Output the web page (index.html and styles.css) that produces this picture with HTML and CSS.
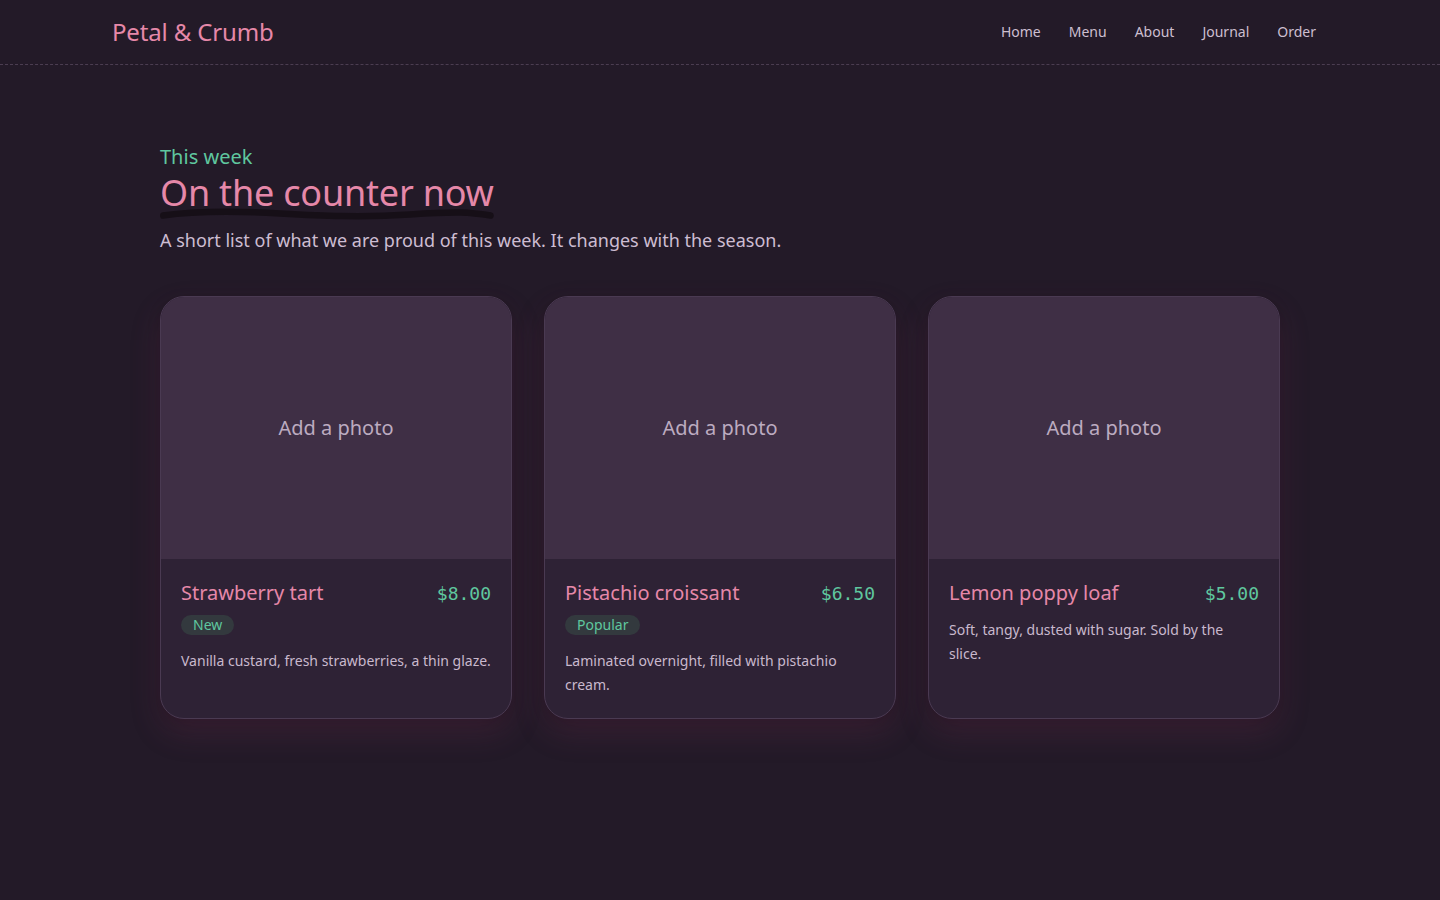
FILE: index.html
```html
<!DOCTYPE html>
<html lang="en">
<head>
<meta charset="utf-8">
<title>Petal &amp; Crumb</title>
<link rel="stylesheet" href="styles.css">
</head>
<body>
<header class="site-header">
  <div class="header-inner">
    <a class="logo" href="#">Petal &amp; Crumb</a>
    <nav class="nav">
      <a href="#">Home</a>
      <a href="#">Menu</a>
      <a href="#">About</a>
      <a href="#">Journal</a>
      <a href="#">Order</a>
    </nav>
  </div>
</header>

<main class="main">
  <section class="intro">
    <p class="eyebrow">This week</p>
    <h1 class="title">
      <span class="title-text">On the counter now</span>
      <svg class="squiggle" viewBox="0 0 334 12" preserveAspectRatio="none" aria-hidden="true">
        <path d="M3 7 C 40 2, 80 3, 120 5 S 200 9, 250 6 S 310 4, 331 7" fill="none" stroke="#160f17" stroke-width="6" stroke-linecap="round"/>
      </svg>
    </h1>
    <p class="lede">A short list of what we are proud of this week. It changes with the season.</p>
  </section>

  <section class="cards">
    <article class="card">
      <div class="photo">Add a photo</div>
      <div class="card-body">
        <div class="card-head">
          <h2 class="card-name">Strawberry tart</h2>
          <span class="price">$8.00</span>
        </div>
        <span class="badge">New</span>
        <p class="card-desc">Vanilla custard, fresh strawberries, a thin glaze.</p>
      </div>
    </article>

    <article class="card">
      <div class="photo">Add a photo</div>
      <div class="card-body">
        <div class="card-head">
          <h2 class="card-name">Pistachio croissant</h2>
          <span class="price">$6.50</span>
        </div>
        <span class="badge">Popular</span>
        <p class="card-desc">Laminated overnight, filled with pistachio cream.</p>
      </div>
    </article>

    <article class="card">
      <div class="photo">Add a photo</div>
      <div class="card-body">
        <div class="card-head">
          <h2 class="card-name">Lemon poppy loaf</h2>
          <span class="price">$5.00</span>
        </div>
        <p class="card-desc">Soft, tangy, dusted with sugar. Sold by the slice.</p>
      </div>
    </article>
  </section>
</main>
</body>
</html>
```

FILE: styles.css
```css
* {
  box-sizing: border-box;
}

html,
body {
  margin: 0;
  padding: 0;
}

body {
  background: #231a28;
  color: #cdbdd1;
  font-family: "Noto Sans", "Open Sans", sans-serif;
  min-height: 900px;
}

a {
  text-decoration: none;
}

/* Header */
.site-header {
  border-bottom: 1px dashed #4b3d51;
}

.header-inner {
  max-width: 1216px;
  margin: 0 auto;
  height: 64px;
  display: flex;
  align-items: center;
  justify-content: space-between;
}

.logo {
  color: #e688a9;
  font-size: 24px;
  line-height: 32px;
  letter-spacing: -0.15px;
}

.nav {
  display: flex;
  gap: 28px;
  margin-right: 12px;
}

.nav a {
  color: #cdbfd0;
  font-size: 14px;
  line-height: 20px;
}

/* Intro */
.main {
  width: 1120px;
  margin: 0 auto;
  padding-top: 80px;
}

.eyebrow {
  margin: 0 0 2px;
  color: #5fc79f;
  font-size: 20px;
  line-height: 24px;
}

.title {
  position: relative;
  display: inline-block;
  margin: 0;
  font-weight: 400;
  font-size: 36px;
  line-height: 43px;
  letter-spacing: -0.2px;
  color: #e688a9;
}

.title-text {
  position: relative;
  z-index: 1;
}

/* hand-drawn underline tucked under the heading */
.squiggle {
  position: absolute;
  left: 0;
  bottom: -7px;
  width: 100%;
  height: 13px;
}

.lede {
  margin: 13px 0 0;
  font-size: 18px;
  line-height: 27px;
  color: #cdbdd2;
}

/* Cards */
.cards {
  margin-top: 42px;
  display: grid;
  grid-template-columns: repeat(3, 1fr);
  gap: 32px;
  padding-bottom: 80px;
}

.card {
  background: #2e2235;
  border: 1px solid #4a3a52;
  border-radius: 24px;
  overflow: hidden;
  box-shadow: 0 14px 30px rgba(130, 55, 90, 0.22), 0 4px 12px rgba(10, 5, 12, 0.25);
  display: flex;
  flex-direction: column;
}

.photo {
  height: 262px;
  background: #3f2f45;
  display: flex;
  align-items: center;
  justify-content: center;
  padding-bottom: 1px;
  color: #bcabc0;
  font-size: 20px;
}

.card-body {
  padding: 20px 20px 21px;
  display: flex;
  flex-direction: column;
  align-items: flex-start;
}

.card-head {
  width: 100%;
  display: flex;
  justify-content: space-between;
  align-items: baseline;
}

.card-name {
  margin: 0;
  font-weight: 400;
  font-size: 20px;
  line-height: 28px;
  color: #e688a9;
}

.price {
  font-family: "DejaVu Sans Mono", "Liberation Mono", monospace;
  font-size: 18px;
  color: #5fc79f;
}

.badge {
  margin: 8px 0 3px;
  padding: 1px 12px;
  border-radius: 999px;
  background: #33393e;
  color: #5fc79f;
  font-size: 14px;
  line-height: 18px;
}

.card-desc {
  margin: 11px 0 0;
  font-size: 14px;
  line-height: 24px;
  color: #c9b9cd;
}
```
